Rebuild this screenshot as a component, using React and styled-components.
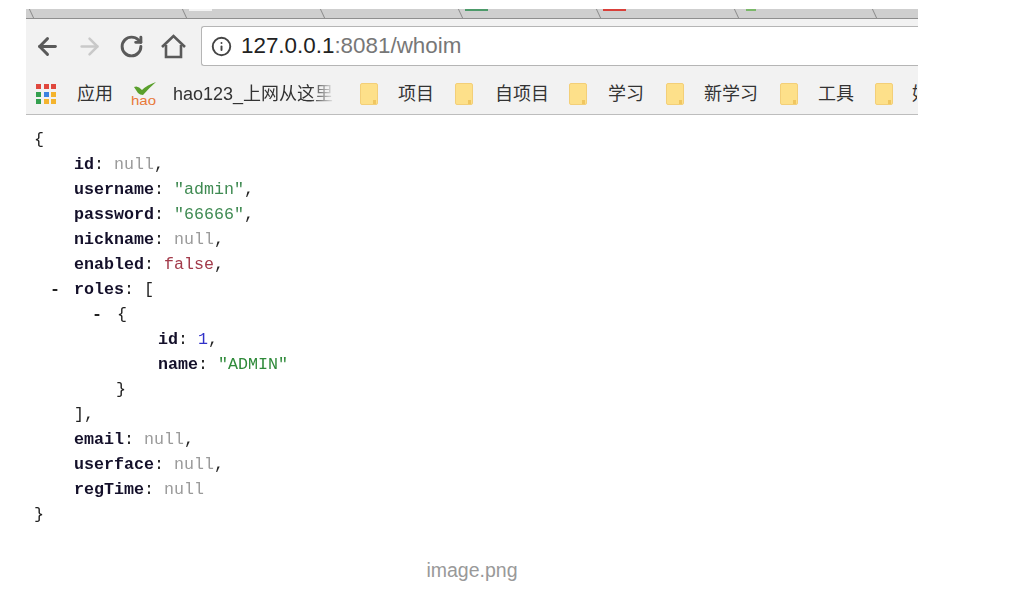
import React from "react";
import styled, { createGlobalStyle } from "styled-components";
import { ArrowLeft, ArrowRight, RotateCw, Info } from "lucide-react";

const GlobalStyle = createGlobalStyle`
  html, body {
    margin: 0;
    padding: 0;
    background: #ffffff;
  }
`;

const Page = styled.div`
  width: 1019px;
  height: 594px;
  overflow: hidden;
  padding: 9px 0 0 26px;
  box-sizing: border-box;
`;

const Shot = styled.div`
  width: 892px;
  filter: blur(0.35px);
`;

// browser chrome
const TabStrip = styled.div`
  display: flex;
  height: 10px;
  padding-left: 20px;
  overflow: hidden;
  background: #cfcfcf;
  border-bottom: 1px solid #8f8f8f;
  box-sizing: border-box;
`;

const Tab = styled.div`
  position: relative;
  flex: 0 0 138px;
  margin-left: ${(props) => (props.$first ? "-15px" : "0")};
  margin-right: ${(props) => (props.$first ? "15px" : "0")};
  &::before {
    content: "";
    position: absolute;
    left: 0;
    top: -2px;
    bottom: -2px;
    width: 1px;
    background: #8a8a8a;
    transform: skewX(${(props) => props.$lean || 25}deg);
  }
  &::after {
    content: "";
    position: absolute;
    left: ${(props) => props.$markLeft || 5}px;
    top: 0;
    width: ${(props) => props.$markWidth || 23}px;
    height: 2px;
    background: ${(props) => props.$mark || "transparent"};
  }
`;

const Toolbar = styled.div`
  display: flex;
  align-items: center;
  height: 47px;
  padding-top: 7px;
  box-sizing: border-box;
  background: #f2f2f2;
`;

const NavButton = styled.div`
  display: flex;
  align-items: center;
  justify-content: center;
  width: ${(props) => props.$w || 42}px;
  color: ${(props) => props.$color || "#5a5a5a"};
`;

const NavGroup = styled.div`
  display: flex;
  align-items: center;
  width: 175px;
  flex: none;
`;

const AddressBar = styled.div`
  flex: 1;
  display: flex;
  align-items: center;
  height: 40px;
  padding-left: 9px;
  gap: 9px;
  background: #ffffff;
  border: 1px solid #b5b5b5;
  border-right: none;
  border-radius: 3px 0 0 3px;
  box-sizing: border-box;
`;

const Url = styled.span`
  font-family: "Liberation Sans", Arial, sans-serif;
  font-size: 22.4px;
  color: #777777;
`;

const Host = styled.span`
  color: #222222;
`;

const Bookmarks = styled.div`
  display: flex;
  align-items: center;
  height: 49px;
  padding: 8px 0 0 10px;
  overflow: hidden;
  background: #f2f2f2;
  border-bottom: 1px solid #bdbdbd;
  box-sizing: border-box;
  white-space: nowrap;
`;

const AppsGrid = styled.div`
  display: grid;
  flex: none;
  grid-template-columns: repeat(3, 5px);
  grid-auto-rows: 5px;
  gap: 2.5px;
  margin-right: 21px;
`;

const AppsDot = styled.div`
  background: ${(props) => props.$color};
`;

const Mark = styled.span`
  flex: none;
  font-family: "Liberation Sans", "Noto Sans CJK SC", sans-serif;
  font-size: 18px;
  line-height: 24px;
  color: #333333;
  margin-right: ${(props) => props.$gap || 21}px;
  width: ${(props) => (props.$w ? `${props.$w}px` : "auto")};
  overflow: hidden;
  ${(props) =>
    props.$fade
      ? "-webkit-mask-image: linear-gradient(to right, #000 85%, transparent 100%);"
      : ""}
`;

const FolderWrap = styled.div`
  flex: none;
  display: flex;
  margin-right: ${(props) => props.$gap || 20}px;
`;

const HaoWrap = styled.div`
  flex: none;
  display: flex;
  margin-right: 16px;
`;

// json view
const Code = styled.div`
  padding-top: 12px;
  font-family: "Liberation Mono", "Courier New", monospace;
  font-size: 16.67px;
  line-height: 25px;
  color: #222222;
`;

const Row = styled.div`
  display: flex;
  height: 25px;
  padding-left: ${(props) => props.$indent}px;
  white-space: pre;
`;

const Dash = styled.span`
  flex: none;
  width: ${(props) => props.$w || 24}px;
  font-weight: 700;
`;

const Key = styled.span`
  font-weight: 700;
  color: #14102a;
`;

const Value = styled.span`
  color: ${(props) => props.$color};
`;

const Caption = styled.div`
  width: 892px;
  margin-top: 30px;
  text-align: center;
  font-family: "Liberation Sans", Arial, sans-serif;
  font-size: 19.5px;
  line-height: 26px;
  color: #999999;
`;

const Folder = ({ gap }) => (
  <FolderWrap $gap={gap}>
    <svg width="18" height="22" viewBox="0 0 18 22">
      <path
        d="M2 .5h14a1.5 1.5 0 0 1 1.5 1.5v18a1.5 1.5 0 0 1-1.5 1.5H2A1.5 1.5 0 0 1 .5 20V2A1.5 1.5 0 0 1 2 .5z"
        fill="#fde08a"
        stroke="#f3cf78"
      />
      <path d="M13 17h3v4h-3z" fill="#f0c660" />
    </svg>
  </FolderWrap>
);

const HaoLogo = () => (
  <HaoWrap>
    <svg width="26" height="24" viewBox="0 0 26 24">
      <path d="M3 5 Q7 3 11 8 Q16 3 25 0 Q18 6 12 13 Q9 13 7 11 Q5 8 3 5z" fill="#5aa02c" />
      <text
        x="0"
        y="23"
        fontFamily="Liberation Sans"
        fontSize="13"
        textLength="25"
        lengthAdjust="spacingAndGlyphs"
        fill="#e8793a"
      >
        hao
      </text>
    </svg>
  </HaoWrap>
);

const HomeIcon = () => (
  <svg width="27" height="27" viewBox="0 0 27 27" fill="none" stroke="#5a5a5a" strokeWidth="2.6">
    <path d="M2 14 13.5 3 25 14" />
    <path d="M6 12v12h15V12" />
  </svg>
);

const appColors = [
  "#e0483e", "#e0483e", "#e0483e",
  "#34a04f", "#3b82e0", "#f4b42e",
  "#34a04f", "#f4b42e", "#f4b42e",
];

const NULL = "#9a9a9a";
const STR = "#3f8a52";

const App = () => (
  <Page>
    <GlobalStyle />
    <Shot>
      <TabStrip>
        <Tab $first />
        <Tab $mark="#f4f4f4" />
        <Tab />
        <Tab $mark="#4d9a6a" />
        <Tab $mark="#d9403a" />
        <Tab $mark="#7bb86a" $markLeft={10} $markWidth={10} />
        <Tab />
      </TabStrip>
      <Toolbar>
        <NavGroup>
          <NavButton>
            <ArrowLeft size={27} strokeWidth={2.6} />
          </NavButton>
          <NavButton $color="#c9c9c9">
            <ArrowRight size={27} strokeWidth={2.2} />
          </NavButton>
          <NavButton>
            <RotateCw size={25} strokeWidth={2.8} />
          </NavButton>
          <NavButton>
            <HomeIcon />
          </NavButton>
        </NavGroup>
        <AddressBar>
          <Info size={21} strokeWidth={2.2} color="#444444" />
          <Url>
            <Host>127.0.0.1</Host>:8081/whoim
          </Url>
        </AddressBar>
      </Toolbar>
      <Bookmarks>
        <AppsGrid>
          {appColors.map((color, index) => (
            <AppsDot key={index} $color={color} />
          ))}
        </AppsGrid>
        <Mark $gap={18}>应用</Mark>
        <HaoLogo />
        <Mark $w={162} $fade $gap={25}>hao123_上网从这里</Mark>
        <Folder />
        <Mark>项目</Mark>
        <Folder gap={22} />
        <Mark $gap={20}>自项目</Mark>
        <Folder gap={21} />
        <Mark $gap={22}>学习</Mark>
        <Folder />
        <Mark $gap={22}>新学习</Mark>
        <Folder />
        <Mark>工具</Mark>
        <Folder gap={19} />
        <Mark $w={5}>好</Mark>
      </Bookmarks>
      <Code>
        <Row $indent={8}>{"{"}</Row>
        <Row $indent={48}><Key>id</Key>: <Value $color={NULL}>null</Value>,</Row>
        <Row $indent={48}><Key>username</Key>: <Value $color={STR}>"admin"</Value>,</Row>
        <Row $indent={48}><Key>password</Key>: <Value $color={STR}>"66666"</Value>,</Row>
        <Row $indent={48}><Key>nickname</Key>: <Value $color={NULL}>null</Value>,</Row>
        <Row $indent={48}><Key>enabled</Key>: <Value $color="#a23a4a">false</Value>,</Row>
        <Row $indent={24}><Dash>-</Dash><Key>roles</Key>: [</Row>
        <Row $indent={66}><Dash $w={25}>-</Dash>{"{"}</Row>
        <Row $indent={132}><Key>id</Key>: <Value $color="#3030c8">1</Value>,</Row>
        <Row $indent={132}><Key>name</Key>: <Value $color="#2f8a3a">"ADMIN"</Value></Row>
        <Row $indent={90}>{"}"}</Row>
        <Row $indent={48}>],</Row>
        <Row $indent={48}><Key>email</Key>: <Value $color={NULL}>null</Value>,</Row>
        <Row $indent={48}><Key>userface</Key>: <Value $color={NULL}>null</Value>,</Row>
        <Row $indent={48}><Key>regTime</Key>: <Value $color={NULL}>null</Value></Row>
        <Row $indent={8}>{"}"}</Row>
      </Code>
    </Shot>
    <Caption>image.png</Caption>
  </Page>
);

export default App;
